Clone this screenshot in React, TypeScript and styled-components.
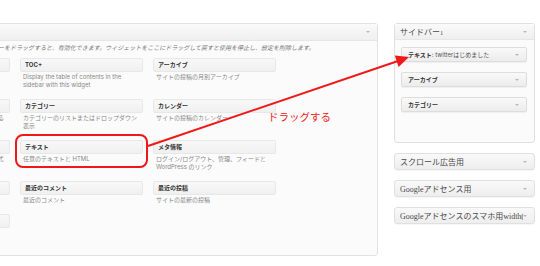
import styled, { createGlobalStyle, css } from "styled-components";

const GlobalStyle = createGlobalStyle`
  html, body {
    margin: 0;
    padding: 0;
    background: #fff;
  }
  body {
    font-family: Inter, "Noto Sans CJK JP", sans-serif;
  }
`;

const Page = styled.div`
  position: relative;
  display: flex;
  align-items: flex-start;
  width: 540px;
  height: 266px;
  padding-top: 23px;
  box-sizing: border-box;
  overflow: hidden;
`;

/* available widgets panel, cropped on the left */
const MainPanel = styled.section`
  flex: none;
  margin-left: -125px;
  width: 503px;
  height: 233px;
  box-sizing: border-box;
  border: 1px solid #e2e2e2;
  border-radius: 3px;
  background: #fbfbfb;
`;

const PanelHeader = styled.div`
  display: flex;
  align-items: center;
  justify-content: space-between;
  height: 16px;
  padding: 0 7px 0 5px;
  border-bottom: 1px solid #e6e6e6;
  background: linear-gradient(#fafafa, #efefef);
`;

const Caret = styled.span`
  flex: none;
  width: 0;
  height: 0;
  border-left: 2px solid transparent;
  border-right: 2px solid transparent;
  border-top: 2px solid #b8b8b8;
`;

const Intro = styled.p`
  margin: 3px 0 6px;
  padding-left: 14px;
  font-size: 6px;
  line-height: 8px;
  font-style: italic;
  color: #777;
  white-space: nowrap;
`;

const WidgetGrid = styled.div`
  display: grid;
  grid-template-columns: repeat(3, 123px);
  column-gap: 10px;
  padding: 0 11px;
`;

const Widget = styled.div<{ $highlight?: boolean }>`
  position: relative;
  align-self: start;
  margin-bottom: 10px;

  ${(p) =>
    p.$highlight &&
    css`
      &::after {
        content: "";
        position: absolute;
        left: -5px;
        right: -5px;
        top: -6px;
        bottom: -5px;
        border: 2px solid #f01818;
        border-radius: 8px;
      }
    `}
`;

const WidgetTitle = styled.div`
  height: 14px;
  box-sizing: border-box;
  padding: 0 4px;
  border: 1px solid #e8e8e8;
  border-radius: 2px;
  background: linear-gradient(#f8f8f8, #f0f0f0);
  font-size: 6px;
  font-weight: bold;
  line-height: 12px;
  color: #333;
`;

const WidgetDesc = styled.div`
  margin-top: 1px;
  padding: 0 3px;
  font-size: 6px;
  line-height: 8px;
  color: #888;
`;

const Sidebar = styled.aside`
  flex: none;
  display: flex;
  flex-direction: column;
  gap: 10px;
  width: 141px;
  margin-left: 16px;
`;

const SidebarPanel = styled.div`
  border: 1px solid #e0e0e0;
  border-radius: 3px;
  background: #fbfbfb;
`;

const SidebarHeader = styled.div`
  display: flex;
  align-items: center;
  justify-content: space-between;
  height: 15px;
  padding: 0 7px 0 5px;
  border-bottom: 1px solid #e6e6e6;
  background: linear-gradient(#fafafa, #efefef);
`;

const SerifTitle = styled.span`
  overflow: hidden;
  white-space: nowrap;
  font-family: "Liberation Serif", "Noto Sans CJK JP", serif;
  font-size: 8px;
  color: #4a4a4a;
`;

const Num = styled.span`
  font-size: 6.5px;
`;

const SidebarBody = styled.div`
  display: flex;
  flex-direction: column;
  gap: 10px;
  padding: 7px 7px 30px 6px;
`;

const SidebarWidget = styled.div`
  display: flex;
  align-items: center;
  justify-content: space-between;
  height: 15px;
  box-sizing: border-box;
  padding: 0 7px 0 6px;
  border: 1px solid #dddddd;
  border-radius: 2px;
  background: linear-gradient(#f9f9f9, #ececec);
  box-shadow: 0 1px 1px rgba(0, 0, 0, 0.05);
  font-size: 6px;
  font-weight: bold;
  color: #333;
`;

const Note = styled.span`
  font-weight: normal;
  color: #555;
`;

const CollapsedBox = styled.div`
  display: flex;
  align-items: center;
  justify-content: space-between;
  height: 17px;
  box-sizing: border-box;
  padding: 0 7px 0 5px;
  border: 1px solid #e0e0e0;
  border-radius: 3px;
  background: linear-gradient(#f9f9f9, #eeeeee);
  box-shadow: 0 1px 1px rgba(0, 0, 0, 0.04);

  ${SerifTitle} {
    flex: 1;
  }
`;

/* red annotation drawn over the screenshot */
const Overlay = styled.svg`
  position: absolute;
  left: 0;
  top: 0;
  pointer-events: none;
`;

const DragLabel = styled.span`
  position: absolute;
  left: 268px;
  top: 111px;
  font-family: "Noto Sans CJK JP", sans-serif;
  font-size: 10.5px;
  line-height: 12px;
  color: #f02020;
`;

interface WidgetInfo {
  title: string;
  desc: string;
  highlight?: boolean;
}

const widgets: WidgetInfo[] = [
  { title: "RSS", desc: "RSS/Atom フィード" },
  { title: "TOC+", desc: "Display the table of contents in the sidebar with this widget" },
  { title: "アーカイブ", desc: "サイトの投稿の月別アーカイブ" },
  { title: "カスタムメニュー", desc: "カスタムメニューをサイドバーに追加する" },
  { title: "カテゴリー", desc: "カテゴリーのリストまたはドロップダウン表示" },
  { title: "カレンダー", desc: "サイトの投稿のカレンダー" },
  { title: "タグクラウド", desc: "最もよく使われているタグをクラウド形式" },
  { title: "テキスト", desc: "任意のテキストと HTML", highlight: true },
  { title: "メタ情報", desc: "ログイン/ログアウト、管理、フィードと WordPress のリンク" },
  { title: "固定ページ", desc: "サイトの固定ページ一覧" },
  { title: "最近のコメント", desc: "最近のコメント" },
  { title: "最近の投稿", desc: "サイトの最新の投稿" },
  { title: "検索", desc: "" },
];

const collapsed = [
  "スクロール広告用",
  "Googleアドセンス用",
  "Googleアドセンスのスマホ用width(320)",
];

const App = () => {
  return (
    <Page>
      <GlobalStyle />
      <MainPanel>
        <PanelHeader>
          <span />
          <Caret />
        </PanelHeader>
        <Intro>
          ここからウィジェットを右側のサイドバーをドラッグすると、有効化できます。ウィジェットをここにドラッグして戻すと使用を停止し、設定を削除します。
        </Intro>
        <WidgetGrid>
          {widgets.map((w) => (
            <Widget key={w.title} $highlight={w.highlight}>
              <WidgetTitle>{w.title}</WidgetTitle>
              {w.desc && <WidgetDesc>{w.desc}</WidgetDesc>}
            </Widget>
          ))}
        </WidgetGrid>
      </MainPanel>

      <Sidebar>
        <SidebarPanel>
          <SidebarHeader>
            <SerifTitle>
              サイドバー<Num>1</Num>
            </SerifTitle>
            <Caret />
          </SidebarHeader>
          <SidebarBody>
            <SidebarWidget>
              <span>
                テキスト<Note>: twitterはじめました</Note>
              </span>
              <Caret />
            </SidebarWidget>
            <SidebarWidget>
              アーカイブ
              <Caret />
            </SidebarWidget>
            <SidebarWidget>
              カテゴリー
              <Caret />
            </SidebarWidget>
          </SidebarBody>
        </SidebarPanel>
        {collapsed.map((name) => (
          <CollapsedBox key={name}>
            <SerifTitle>{name}</SerifTitle>
            <Caret />
          </CollapsedBox>
        ))}
      </Sidebar>

      <Overlay width="540" height="266" viewBox="0 0 540 266">
        <line x1="148" y1="146" x2="398" y2="61" stroke="#f01818" strokeWidth="2" />
        <polygon points="409,57 394.8,55.5 398.6,66.9" fill="#f01818" />
      </Overlay>
      <DragLabel>ドラッグする</DragLabel>
    </Page>
  );
};

export default App;
